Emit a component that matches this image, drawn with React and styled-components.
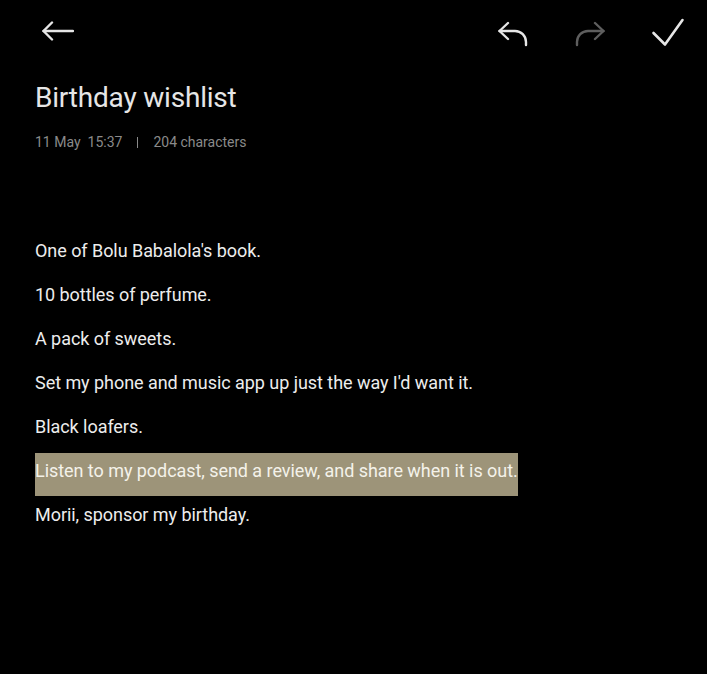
import styled, { createGlobalStyle } from 'styled-components';

const GlobalStyle = createGlobalStyle`
  html, body {
    margin: 0;
    padding: 0;
    background: #000;
  }
  body {
    font-family: Roboto, "Noto Sans", sans-serif;
    -webkit-font-smoothing: antialiased;
  }
`;

const Screen = styled.div`
  width: 707px;
  height: 674px;
  background: #000;
  color: #ececec;
  overflow: hidden;
`;

const Toolbar = styled.header`
  height: 62px;
  display: flex;
  align-items: center;
  justify-content: space-between;
  padding: 0 21px 0 42px;
`;

const Actions = styled.div`
  display: flex;
  align-items: center;
  gap: 45px;
`;

const IconButton = styled.button`
  display: flex;
  padding: 0;
  border: 0;
  background: none;
  color: ${(p) => (p.$disabled ? '#5e5e5e' : '#e6e6e6')};
  cursor: pointer;

  svg {
    display: block;
  }
`;

const Title = styled.h1`
  margin: 18px 0 0 35px;
  font-size: 28px;
  line-height: 36px;
  font-weight: 400;
  letter-spacing: -0.2px;
  color: #e6e6e6;
`;

const Meta = styled.div`
  margin: 16px 0 0 35px;
  display: flex;
  align-items: center;
  font-size: 14px;
  line-height: 20px;
  color: #8a8a8a;
  white-space: pre;
`;

const Divider = styled.span`
  width: 1px;
  height: 11px;
  margin: 0 15px;
  background: #8a8a8a;
`;

const Body = styled.div`
  margin-top: 81px;
  padding-left: 35px;
`;

const Line = styled.p`
  margin: 0;
  height: 44px;
  font-size: 18px;
  line-height: 36px;
  letter-spacing: -0.05px;
  color: #ededed;
`;

const Mark = styled.span`
  display: inline-block;
  height: 43px;
  background: #9d9479;
  color: #f4f2ea;
`;

const BackIcon = () => (
  <svg width='32' height='32' viewBox='0 0 32 32' fill='none' stroke='currentColor' strokeWidth='2.4' strokeLinecap='round' strokeLinejoin='round'>
    <path d='M1.5 16H31' />
    <path d='M10 7.5L1.5 16l8.5 8.5' />
  </svg>
);

const UndoIcon = () => (
  <svg width='32' height='32' viewBox='0 0 32 32' fill='none' stroke='currentColor' strokeWidth='2.4' strokeLinecap='round' strokeLinejoin='round'>
    <path d='M3.5 16H19a11 11 0 0 1 11 11v3' />
    <path d='M12 8l-8.5 8 8.5 8' />
  </svg>
);

const RedoIcon = () => (
  <svg width='32' height='32' viewBox='0 0 32 32' fill='none' stroke='currentColor' strokeWidth='2.4' strokeLinecap='round' strokeLinejoin='round'>
    <path d='M30.5 16H15A11 11 0 0 0 4 27v3' />
    <path d='M22 8l8.5 8-8.5 8' />
  </svg>
);

const CheckIcon = () => (
  <svg width='36' height='32' viewBox='0 0 36 32' fill='none' stroke='currentColor' strokeWidth='2.6' strokeLinecap='round' strokeLinejoin='round'>
    <path d='M3.5 18L15 29.5 32.5 5' />
  </svg>
);

const items = [
  "One of Bolu Babalola's book.",
  '10 bottles of perfume.',
  'A pack of sweets.',
  "Set my phone and music app up just the way I'd want it.",
  'Black loafers.',
  'Listen to my podcast, send a review, and share when it is out.',
  'Morii, sponsor my birthday.'
];

export default function App() {
  return (
    <Screen>
      <GlobalStyle />
      <Toolbar>
        <IconButton aria-label='Back'>
          <BackIcon />
        </IconButton>
        <Actions>
          <IconButton aria-label='Undo'>
            <UndoIcon />
          </IconButton>
          <IconButton aria-label='Redo' $disabled>
            <RedoIcon />
          </IconButton>
          <IconButton aria-label='Save'>
            <CheckIcon />
          </IconButton>
        </Actions>
      </Toolbar>

      <Title>Birthday wishlist</Title>
      <Meta>
        <span>11 May  15:37</span>
        <Divider />
        <span>204 characters</span>
      </Meta>

      <Body>
        {items.map((text, i) => (
          <Line key={i}>{i === 5 ? <Mark>{text}</Mark> : text}</Line>
        ))}
      </Body>
    </Screen>
  );
}
